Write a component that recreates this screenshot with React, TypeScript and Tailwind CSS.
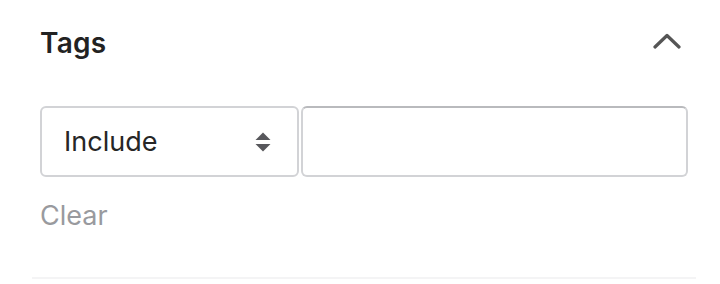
import React from "react";

export default function App() {
  return (
    <div className="w-[720px] h-[284px] bg-white pl-8 pr-6" style={{ fontFamily: "Inter, 'Noto Sans', sans-serif" }}>
      <div className="border-b-2 border-[#f4f4f5] px-2 pt-[27px] pb-[45px]">
        <div className="flex items-center justify-between h-8">
          <span className="text-[28px] leading-8 font-semibold text-[#222222] tracking-[0.2px]">Tags</span>
          <svg width="28" height="18" viewBox="0 0 28 18" className="mr-[7px] -mt-[5px]">
            <polyline points="2,15 14,3.5 26,15" fill="none" stroke="#555555" strokeWidth="3.2" strokeLinecap="round" strokeLinejoin="round" />
          </svg>
        </div>
        <div className="flex gap-[2px] mt-[47px] h-[71px]">
          <div className="w-[259px] flex items-center justify-between rounded-[6px] border-2 border-[#d2d3d6] pl-[22px] pr-[26px] pt-[2px]">
            <span className="text-[27px] text-[#262626]">Include</span>
            <svg width="16" height="22" viewBox="0 0 16 22">
              <path d="M8 0.5 L15.5 8 L0.5 8 Z" fill="#58585c" />
              <path d="M0.5 12 L15.5 12 L8 19.5 Z" fill="#58585c" />
            </svg>
          </div>
          <div className="flex-1 rounded-[6px] border-2 border-[#d2d3d6] border-t-[#b9babd]" />
        </div>
        <div className="mt-[23px] h-8 flex items-center">
          <span className="text-[27px] leading-8 text-[#999a9e]">Clear</span>
        </div>
      </div>
    </div>
  );
}
